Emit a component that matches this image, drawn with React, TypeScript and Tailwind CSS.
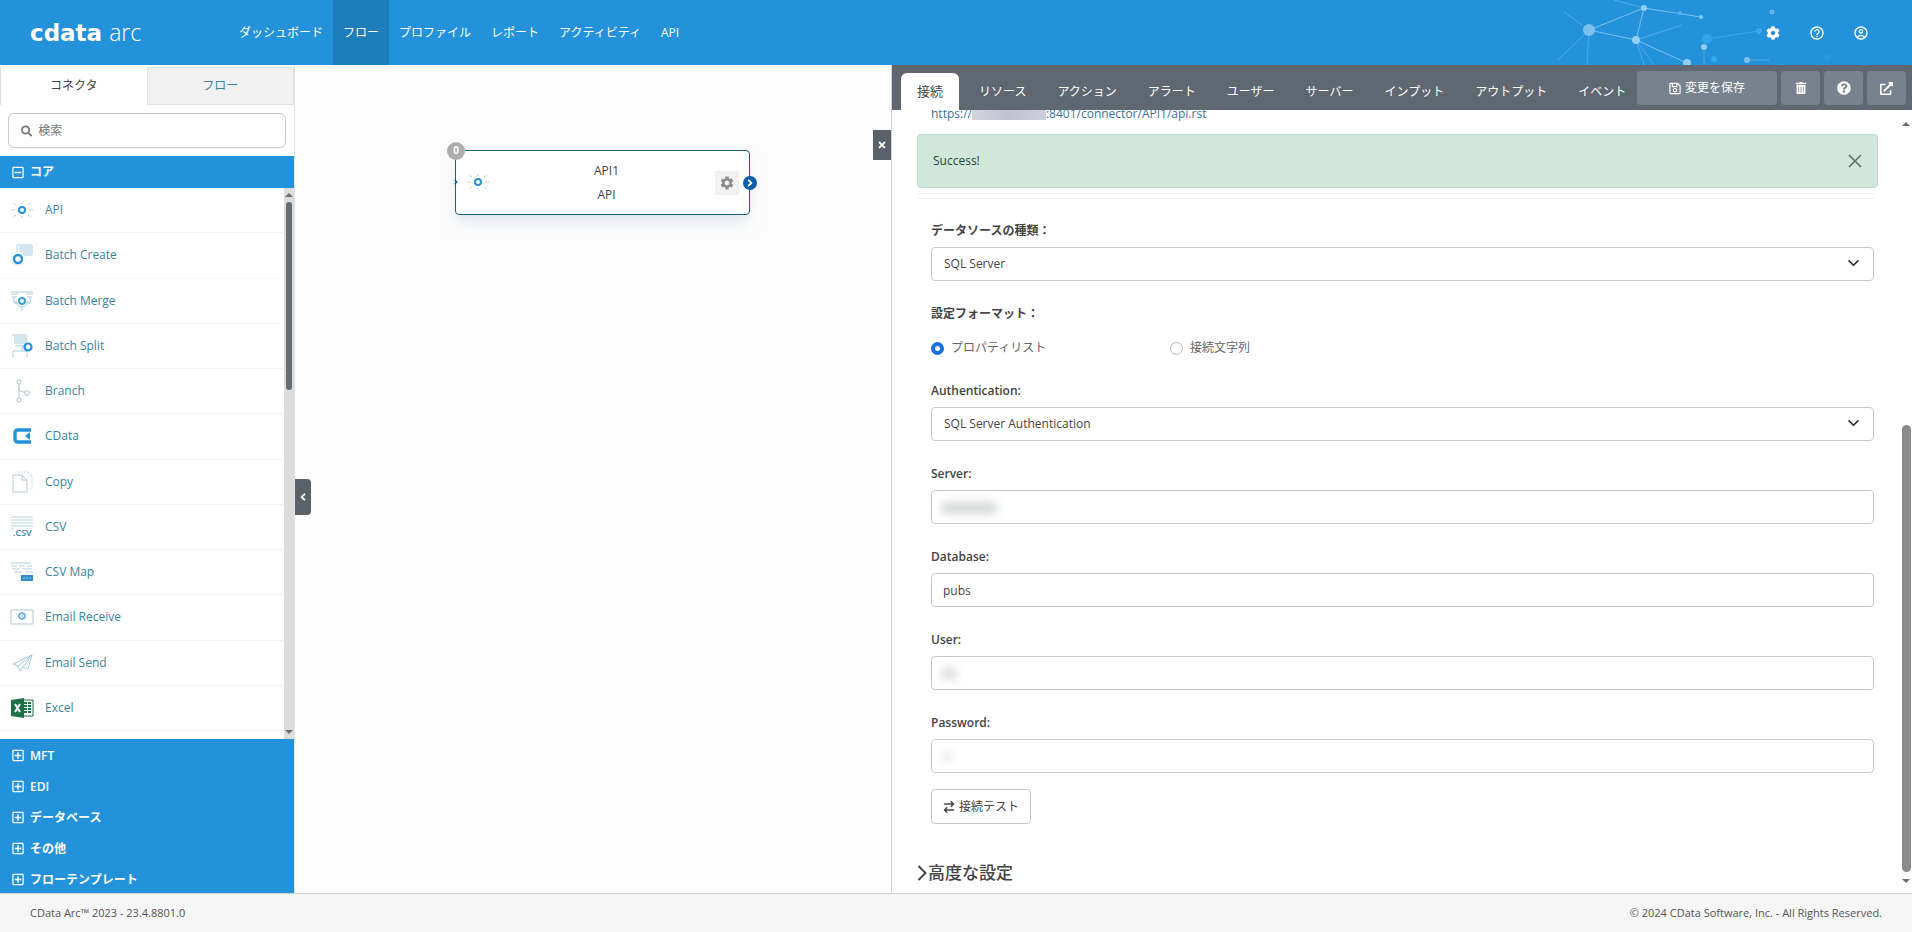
import type { ReactNode } from "react";
import {
  FaAngleLeft,
  FaAngleRight,
  FaCog,
  FaExternalLinkAlt,
  FaQuestionCircle,
  FaRegMinusSquare,
  FaRegPlusSquare,
  FaRegSave,
  FaSearch,
  FaTimes,
  FaTrashAlt,
} from "react-icons/fa";
import { FaArrowRightArrowLeft } from "react-icons/fa6";
import { MdHelpOutline, MdOutlineAccountCircle, MdSettings } from "react-icons/md";

const NAV = ["ダッシュボード", "フロー", "プロファイル", "レポート", "アクティビティ", "API"];

const CONNECTORS: { name: string; icon: ReactNode }[] = [
  { name: "API", icon: <ApiIcon /> },
  { name: "Batch Create", icon: <BatchCreateIcon /> },
  { name: "Batch Merge", icon: <BatchMergeIcon /> },
  { name: "Batch Split", icon: <BatchSplitIcon /> },
  { name: "Branch", icon: <BranchIcon /> },
  { name: "CData", icon: <CDataIcon /> },
  { name: "Copy", icon: <CopyIcon /> },
  { name: "CSV", icon: <CsvIcon /> },
  { name: "CSV Map", icon: <CsvMapIcon /> },
  { name: "Email Receive", icon: <EmailReceiveIcon /> },
  { name: "Email Send", icon: <EmailSendIcon /> },
  { name: "Excel", icon: <ExcelIcon /> },
];

const SECTIONS = ["MFT", "EDI", "データベース", "その他", "フローテンプレート"];

const SETTINGS_TABS = [
  "リソース",
  "アクション",
  "アラート",
  "ユーザー",
  "サーバー",
  "インプット",
  "アウトプット",
  "イベント",
];

export default function App() {
  return (
    <div className="flex h-screen flex-col overflow-hidden bg-white font-['Open_Sans','Noto_Sans_CJK_JP',sans-serif] text-xs text-[#444]">
      <Header />
      <main className="flex min-h-0 flex-1">
        <Sidebar />
        <Canvas />
        <SettingsPanel />
      </main>
      <footer className="flex h-[39px] shrink-0 items-center justify-between border-t border-[#cfd3d4] bg-[#f6f6f6] px-[30px] text-[11px] text-[#555]">
        <span>CData Arc™ 2023 - 23.4.8801.0</span>
        <span>© 2024 CData Software, Inc. - All Rights Reserved.</span>
      </footer>
    </div>
  );
}

function Header() {
  return (
    <header className="relative flex h-[65px] shrink-0 items-stretch bg-[#2492da] text-white">
      <a href="#" className="flex w-[229px] items-center pl-[30px]">
        <span className="flex items-baseline gap-[7px] text-[23px] leading-6">
          <span className="font-['DejaVu_Sans',sans-serif] font-bold">cdata</span>
          <span className="font-light">arc</span>
        </span>
      </a>
      <nav className="flex" aria-label="Main">
        {NAV.map((item) => (
          <a
            key={item}
            href="#"
            className={`flex items-center px-2.5 ${item === "フロー" ? "bg-[#1c7ebb]" : ""}`}
          >
            {item}
          </a>
        ))}
      </nav>
      <Network />
      <div className="relative ml-auto flex items-center gap-7 pr-[43px]">
        <button aria-label="設定">
          <FaCog className="h-[14px] w-4" />
        </button>
        <button aria-label="ヘルプ">
          <MdHelpOutline className="h-4 w-4" />
        </button>
        <button aria-label="アカウント">
          <MdOutlineAccountCircle className="h-4 w-4" />
        </button>
      </div>
    </header>
  );
}

function Network() {
  return (
    <svg className="pointer-events-none absolute right-0 top-0 h-[65px] w-[362px]" viewBox="0 0 362 65" fill="none" aria-hidden>
      <g stroke="#7cc0ee" strokeWidth="1">
        <path d="M39 30 94 8 86 40 39 30M86 40l51 23M94 8l57 9" />
        <path d="M39 30 8 60M39 30l-2 35M39 30 14 12M94 8 64 0M86 40l46-15M86 40l8 25M86 40l18 25M154 47v18M197 60h22" opacity="0.5" />
        <path d="M157 39l52-8" stroke="#38a9f0" />
      </g>
      <circle cx="39" cy="30" r="6" fill="#7cc0ee" />
      <circle cx="94" cy="8" r="3" fill="#8fd0f6" />
      <circle cx="86" cy="40" r="4" fill="#8fd0f6" />
      <circle cx="151" cy="17" r="2" fill="#7fcdf6" />
      <circle cx="130" cy="13" r="2" fill="#4fb2ee" />
      <circle cx="154" cy="47" r="3" fill="#8fcdf5" />
      <circle cx="137" cy="63" r="4" fill="#8fcdf5" />
      <circle cx="157" cy="39" r="5" fill="#2fa3ec" />
      <circle cx="209" cy="31" r="3" fill="#38a9f0" />
      <circle cx="164" cy="59" r="3" fill="#2fa9f0" />
      <circle cx="197" cy="60" r="3" fill="#7cc0ee" />
      <circle cx="222" cy="12" r="2" stroke="#7cc0ee" fill="#56afe8" />
      <circle cx="277" cy="57" r="4" fill="#2b96dc" />
    </svg>
  );
}

function Sidebar() {
  return (
    <aside className="flex w-[295px] shrink-0 flex-col border-r border-[#e2e2e2] bg-white">
      <div className="mt-[2px] flex h-[38px] shrink-0" role="tablist">
        <button role="tab" aria-selected="true" className="flex-1 border-l border-[#ddd] bg-white">
          コネクタ
        </button>
        <button role="tab" aria-selected="false" className="flex-1 border border-[#e2e2e2] bg-[#f1f1f2] text-[#3a84a0]">
          フロー
        </button>
      </div>

      <label className="mx-2 mb-2 mt-2 flex h-[35px] shrink-0 items-center gap-1.5 rounded-md border border-[#c8c8c8] px-3">
        <FaSearch className="h-3 w-3 text-[#777]" />
        <input
          type="search"
          aria-label="検索"
          placeholder="検索"
          className="w-full bg-transparent outline-none placeholder:text-[#777]"
        />
      </label>

      <button className="flex h-8 shrink-0 items-center gap-1.5 bg-[#2492da] px-3 font-semibold text-white">
        <FaRegMinusSquare className="h-[13px] w-3" />
        コア
      </button>

      <div className="flex min-h-0 flex-1">
        <ul className="flex min-w-0 flex-1 flex-col overflow-hidden pb-2">
          {CONNECTORS.map((c) => (
            <li key={c.name} className="flex-1 border-b border-[#f2f2f2]">
              <a href="#" className="flex h-full items-center gap-[11px] pl-[10px] text-[#3a84a0]">
                <span className="flex h-6 w-6 items-center justify-center">{c.icon}</span>
                {c.name}
              </a>
            </li>
          ))}
        </ul>
        <div className="flex w-[10px] flex-col items-center bg-[#dcdcdc]">
          <ScrollArrow up />
          <div className="h-[188px] w-[6px] rounded-full bg-[#666c6f]" />
          <div className="mt-auto flex">
            <ScrollArrow />
          </div>
        </div>
      </div>

      <div className="h-[154px] shrink-0 overflow-hidden bg-[#2492da] pt-px text-white">
        {SECTIONS.map((s) => (
          <button key={s} className="flex h-[31px] w-full items-center gap-1.5 px-3 font-semibold">
            <FaRegPlusSquare className="h-[13px] w-3" />
            {s}
          </button>
        ))}
      </div>
    </aside>
  );
}

function Canvas() {
  return (
    <section className="relative min-w-0 flex-1 bg-[#fcfcfc]" aria-label="フロー">
      <button
        aria-label="サイドバーを閉じる"
        className="absolute left-0 top-[414px] flex h-9 w-4 items-center justify-center rounded-r-sm bg-[#59626a] text-white"
      >
        <FaAngleLeft className="h-3 w-3" />
      </button>
      <button
        aria-label="パネルを閉じる"
        className="absolute right-0 top-[65px] flex h-[30px] w-[18px] items-center justify-center bg-[#59626a] text-white"
      >
        <FaTimes className="h-[10px] w-[10px]" />
      </button>

      <div className="absolute left-[160px] top-[85px] flex h-[65px] w-[295px] items-center justify-center rounded-sm border border-[#1f5f80] bg-white pl-2 shadow-lg shadow-slate-300/50">
        <div className="flex flex-col text-center text-xs leading-6">
          <span>API1</span>
          <span>API</span>
        </div>
        <span className="absolute -left-[9px] -top-[9px] flex h-[18px] w-[18px] items-center justify-center rounded-full bg-[#adadad] text-[10px] font-bold text-white">
          0
        </span>
        <FaAngleRight className="absolute -left-1 top-[27px] h-2 w-2 text-[#0b5ea8]" />
        <span className="absolute left-[10px] top-[19px]">
          <ApiIcon />
        </span>
        <button
          aria-label="API1 の設定"
          className="absolute right-[10px] top-[20px] flex h-6 w-6 items-center justify-center bg-[#f1f1f1] text-[#8b8b8b]"
        >
          <MdSettings className="h-4 w-4" />
        </button>
        <span className="absolute -right-2 top-[25px] flex h-[14px] w-[14px] items-center justify-center rounded-full bg-[#0b5ea8] text-white">
          <FaAngleRight className="h-3 w-3" />
        </span>
      </div>
    </section>
  );
}

function SettingsPanel() {
  return (
    <section className="flex w-[53.4%] shrink-0 flex-col border-l border-[#d0d4d6]">
      <div className="flex h-[45px] shrink-0 items-end bg-[#5f6771] pl-[9px] pr-[6px] text-white">
        <div className="flex h-[37px] min-w-0 gap-px whitespace-nowrap" role="tablist">
          <button role="tab" aria-selected="true" className="mr-1 shrink-0 rounded-t-md bg-white px-4 text-[13px] text-[#444]">
            接続
          </button>
          {SETTINGS_TABS.map((t) => (
            <button key={t} role="tab" aria-selected="false" className="shrink-0 px-[15px]">
              {t}
            </button>
          ))}
        </div>
        <div className="mb-[5px] ml-auto flex h-[34px] shrink-0 gap-1">
          <button className="flex w-[140px] items-center justify-center gap-1 rounded-sm bg-[#78828e]">
            <FaRegSave className="h-[13px] w-3" />
            変更を保存
          </button>
          <IconButton label="削除">
            <FaTrashAlt className="h-3 w-3" />
          </IconButton>
          <IconButton label="ヘルプ">
            <FaQuestionCircle className="h-[14px] w-[14px]" />
          </IconButton>
          <IconButton label="新しいウィンドウで開く">
            <FaExternalLinkAlt className="h-[13px] w-[13px]" />
          </IconButton>
        </div>
      </div>

      <div className="flex min-h-0 flex-1">
        <div className="min-w-0 flex-1 overflow-hidden pl-[25px] pr-[22px]">
          {/* Scrolled partly under the tab bar */}
          <a href="#" className="-mt-[6px] ml-[14px] flex h-5 items-center text-[#3d7199]">
            https://
            <span className="h-3 w-[74px] bg-linear-to-r from-[#d3d5de] via-[#bfc1d0] to-[#cdcfd9]" />
            :8401/connector/API1/api.rst
          </a>

          <div
            role="alert"
            className="mt-[10px] flex h-[54px] items-center justify-between rounded border border-[#bfdccd] bg-[#d1e7dc] px-[15px] text-[#25483a]"
          >
            Success!
            <button aria-label="閉じる" className="text-[#5b6d64]">
              <svg viewBox="0 0 14 14" className="h-[14px] w-[14px]" fill="none" stroke="currentColor" strokeWidth="1.5" aria-hidden>
                <path d="M1 1l12 12M13 1 1 13" />
              </svg>
            </button>
          </div>
          <div className="mr-1 mt-[5px] h-[6px] border-y border-[#f1f1f1]" />

          <form className="ml-[14px] mr-1 mt-[22px]">
            <SelectField id="datasource" label="データソースの種類：" value="SQL Server" />

            <fieldset className="mb-[23px]">
              <legend className="h-5 font-semibold leading-5">設定フォーマット：</legend>
              <div className="mt-[14px] flex h-5 items-center">
                <RadioOption label="プロパティリスト" checked />
                <RadioOption label="接続文字列" />
              </div>
            </fieldset>

            <SelectField id="auth" label="Authentication:" value="SQL Server Authentication" />
            <TextField id="server" label="Server:" redacted="w-14 h-3" />
            <TextField id="database" label="Database:" value="pubs" />
            <TextField id="user" label="User:" redacted="w-4 h-3 opacity-80" />
            <TextField id="password" label="Password:" type="password" redacted="w-3 h-3 opacity-40" />

            <button
              type="button"
              className="-mt-[7px] flex h-[35px] items-center gap-1 rounded border border-[#c4c8c9] px-[11px]"
            >
              <FaArrowRightArrowLeft className="h-3 w-3" />
              接続テスト
            </button>
          </form>

          <button className="mt-[37px] flex h-6 items-center text-[17px] font-medium">
            <svg viewBox="0 0 10 16" className="h-4 w-[11px]" fill="none" stroke="currentColor" strokeWidth="2" aria-hidden>
              <path d="M1 1l7 7-7 7" />
            </svg>
            高度な設定
          </button>
        </div>

        <div className="flex w-3 flex-col items-center pb-[5px] pt-[7px]">
          <ScrollArrow up />
          <div className="mb-[2px] mt-auto h-[447px] w-[9px] rounded-full bg-[#8b8b8b]" />
          <ScrollArrow />
        </div>
      </div>
    </section>
  );
}

function IconButton({ label, children }: { label: string; children: ReactNode }) {
  return (
    <button aria-label={label} className="flex w-[39px] items-center justify-center rounded-sm bg-[#78828e]">
      {children}
    </button>
  );
}

function SelectField({ id, label, value }: { id: string; label: string; value: string }) {
  return (
    <div className="mb-[23px]">
      <label htmlFor={id} className="mb-[6px] block h-5 font-semibold leading-5">
        {label}
      </label>
      <div className="relative">
        <select
          id={id}
          defaultValue={value}
          className="h-[34px] w-full appearance-none rounded border border-[#c6cacb] bg-white px-3 outline-none"
        >
          <option>{value}</option>
        </select>
        <svg
          viewBox="0 0 12 8"
          className="pointer-events-none absolute right-[15px] top-[13px] h-[7px] w-[11px]"
          fill="none"
          stroke="#333"
          strokeWidth="2"
          strokeLinecap="round"
          strokeLinejoin="round"
          aria-hidden
        >
          <path d="M1 1l5 5 5-5" />
        </svg>
      </div>
    </div>
  );
}

type TextFieldProps = {
  id: string;
  label: string;
  value?: string;
  type?: string;
  redacted?: string;
};

function TextField({ id, label, value, type = "text", redacted }: TextFieldProps) {
  return (
    <div className="mb-[23px]">
      <label htmlFor={id} className="mb-[6px] block h-5 font-semibold leading-5">
        {label}
      </label>
      <div className="relative">
        <input
          id={id}
          type={type}
          defaultValue={value}
          className="h-[34px] w-full rounded border border-[#c6cacb] bg-white px-[11px] outline-none"
        />
        {redacted && (
          <span className={`pointer-events-none absolute left-[10px] top-3 rounded bg-[#d6d8d8] blur-xs ${redacted}`} aria-hidden />
        )}
      </div>
    </div>
  );
}

function RadioOption({ label, checked }: { label: string; checked?: boolean }) {
  return (
    <label className="flex w-[239px] items-center gap-[7px] text-[#666]">
      <input
        type="radio"
        name="format"
        defaultChecked={checked}
        className="h-[13px] w-[13px] appearance-none rounded-full border border-[#b5b5b5] bg-white checked:border-4 checked:border-[#1a6fe0]"
      />
      {label}
    </label>
  );
}

function ScrollArrow({ up }: { up?: boolean }) {
  return (
    <svg viewBox="0 0 10 14" className={`h-[14px] w-[10px] shrink-0 ${up ? "" : "rotate-180"}`} aria-hidden>
      <path d="M1 9 5 5l4 4z" fill="#6d6d6d" />
    </svg>
  );
}

/* Connector icons, all on a 24 unit grid */

function Icon({ children }: { children: ReactNode }) {
  return (
    <svg viewBox="0 0 24 24" className="h-6 w-6" fill="none" aria-hidden>
      {children}
    </svg>
  );
}

function ApiIcon() {
  return (
    <Icon>
      <circle cx="12" cy="12" r="3" stroke="#2492da" strokeWidth="2" />
      <path d="M6 7 3 5M5 12H1M6 17l-3 2M18 7l3-2M19 12h4M18 17l3 2M12 6V4M12 20v-2" stroke="#a3cce0" strokeDasharray="2 1" />
    </Icon>
  );
}

function BatchCreateIcon() {
  return (
    <Icon>
      <path d="M7 9V2h15v10h-9M9 4h12M9 6h12M9 8h12M13 10h8" stroke="#a9cfe0" />
      <path d="M2 15v-4l4-2M2 20l3 2h7" stroke="#cfe2ea" strokeDasharray="2 1" />
      <circle cx="8" cy="16" r="4" stroke="#2492da" strokeWidth="2.4" />
    </Icon>
  );
}

function BatchMergeIcon() {
  return (
    <Icon>
      <path d="M1 3h22M1 5h7M16 5h7M2 8h5M17 8h5M4 8v6h4M20 8v6h-4M12 17v5" stroke="#a9cfe0" />
      <circle cx="12" cy="12" r="3" stroke="#3f9fd0" strokeWidth="2" />
      <path d="M6 12a6 6 0 0 0 12 0" stroke="#b4ccd6" />
    </Icon>
  );
}

function BatchSplitIcon() {
  return (
    <Icon>
      <path d="M2 1h14v11H5M4 3h11M4 5h13M4 7h11M4 9h11M12 12v4M3 23v-6h14v6" stroke="#a9cfe0" />
      <circle cx="18" cy="13" r="3.5" stroke="#2492da" strokeWidth="2.2" />
    </Icon>
  );
}

function BranchIcon() {
  return (
    <Icon>
      <path d="M9 5v14M9 9c0 3 3 4 6 4" stroke="#b5c6cd" />
      <circle cx="9" cy="3" r="2" stroke="#a9c2cc" />
      <circle cx="9" cy="21" r="2" stroke="#a9c2cc" />
      <circle cx="17" cy="14" r="2.4" stroke="#a9c2cc" />
    </Icon>
  );
}

function CDataIcon() {
  return (
    <Icon>
      <path d="M21 6H8Q5 6 5 9v6q0 3 3 3h13" stroke="#2492da" strokeWidth="3.4" />
      <path d="M20 8v8l-5-4z" fill="#2492da" />
    </Icon>
  );
}

function CopyIcon() {
  return (
    <Icon>
      <path d="M3 5h9l5 5v12H3zM12 5v5h5" stroke="#b0ccd8" />
      <path d="M8 5V2h10l4 4v13h-5M18 2v4h4" stroke="#d3e2e8" strokeDasharray="2 1" />
    </Icon>
  );
}

function CsvIcon() {
  return (
    <Icon>
      <path d="M1 2h22M1 5h22M1 8h22M1 11h22M1 14h3" stroke="#b9d3df" />
      <text x="3" y="21" fill="#3a84b0" className="font-['Open_Sans'] text-[9px] font-semibold">
        .CSV
      </text>
    </Icon>
  );
}

function CsvMapIcon() {
  return (
    <Icon>
      <path d="M1 3h20M1 6h6M9 6h6M17 6h5M2 9h8M12 9h10M4 12h8M15 12h8" stroke="#b3cfe0" />
      <path d="M11 15h12v6H11z" fill="#2e8fc6" />
      <path d="M13 18h8" stroke="#9ed0ea" strokeDasharray="2 1" />
    </Icon>
  );
}

function EmailReceiveIcon() {
  return (
    <Icon>
      <path d="M1 5h22v14H1z" stroke="#b0ccd8" />
      <circle cx="12" cy="11" r="3.5" fill="#8cc0e6" stroke="#6aa9da" />
      <circle cx="12" cy="11" r="1.4" stroke="#fff" />
    </Icon>
  );
}

function EmailSendIcon() {
  return (
    <Icon>
      <path d="M22 4 3 13l5 2 2 5 3-4 5 2zM22 4 8 15M22 4 13 16" stroke="#a5cbd8" />
    </Icon>
  );
}

function ExcelIcon() {
  return (
    <Icon>
      <path d="M12 4h11v16H12z" fill="#fff" stroke="#1d7044" />
      <path d="M14 7h3M18 7h3M14 10h3M18 10h3M14 13h3M18 13h3M14 16h3M18 16h3" stroke="#1d7044" strokeWidth="2" />
      <path d="M1 4l13-2v20L1 20z" fill="#1d7044" />
      <path d="M5 8l5 8M10 8l-5 8" stroke="#fff" strokeWidth="2" />
    </Icon>
  );
}
